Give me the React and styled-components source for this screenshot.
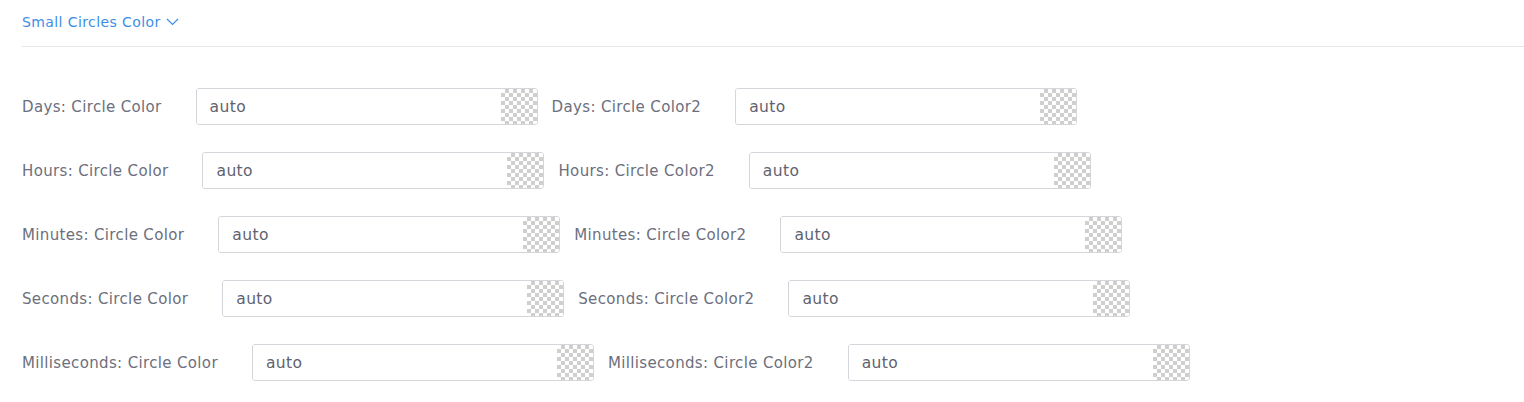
import React from 'react';
import styled, { createGlobalStyle } from 'styled-components';

const Global = createGlobalStyle`
  body {
    margin: 0;
    background: #fff;
    font-family: "DejaVu Sans", "Noto Sans", sans-serif;
  }
`;

const Panel = styled.div`
  padding: 0 0 0 22px;
`;

const Header = styled.div`
  display: flex;
  align-items: center;
  gap: 5px;
  height: 47px;
  border-bottom: 1px solid #e6e6e6;
  color: #3d8fe6;
  font-size: 14px;
  letter-spacing: 0.4px;
  padding-bottom: 3px;
  box-sizing: border-box;
`;

const Rows = styled.div`
  display: flex;
  flex-direction: column;
  gap: 27px;
  padding-top: 41px;
`;

const Row = styled.div`
  display: flex;
  align-items: center;
`;

const Field = styled.div`
  display: flex;
  align-items: center;
  margin-right: 14px;
`;

const Label = styled.span`
  color: #6c6f7d;
  font-size: 15px;
  letter-spacing: 0.35px;
  margin-right: 34px;
  white-space: nowrap;
`;

const InputWrap = styled.div`
  display: flex;
  height: 37px;
  width: 342px;
  border: 1px solid #d3d6db;
  border-radius: 3px;
  box-sizing: border-box;
  overflow: hidden;
`;

const Input = styled.input`
  flex: 1;
  min-width: 0;
  border: none;
  outline: none;
  padding: 0 13px;
  font-family: inherit;
  font-size: 15.5px;
  letter-spacing: 0.4px;
  color: #5f6270;
  background: #fff;
`;

const Swatch = styled.div`
  width: 36px;
  flex: none;
  background-color: #fff;
  background-image:
    linear-gradient(45deg, #cfcfcf 25%, transparent 25%, transparent 75%, #cfcfcf 75%),
    linear-gradient(45deg, #cfcfcf 25%, transparent 25%, transparent 75%, #cfcfcf 75%);
  background-size: 8px 8px;
  background-position: 0 0, 4px 4px;
`;

const units = ['Days', 'Hours', 'Minutes', 'Seconds', 'Milliseconds'];

const ColorField = ({ label }) => (
  <Field>
    <Label>{label}</Label>
    <InputWrap>
      <Input defaultValue="auto" />
      <Swatch />
    </InputWrap>
  </Field>
);

const App = () => (
  <Panel>
    <Global />
    <Header>
      Small Circles Color
      <svg width="13" height="8" viewBox="0 0 13 8" fill="none">
        <path d="M1 1l5.5 5.5L12 1" stroke="#3d8fe6" strokeWidth="1.2" />
      </svg>
    </Header>
    <Rows>
      {units.map((u) => (
        <Row key={u}>
          <ColorField label={`${u}: Circle Color`} />
          <ColorField label={`${u}: Circle Color2`} />
        </Row>
      ))}
    </Rows>
  </Panel>
);

export default App;
